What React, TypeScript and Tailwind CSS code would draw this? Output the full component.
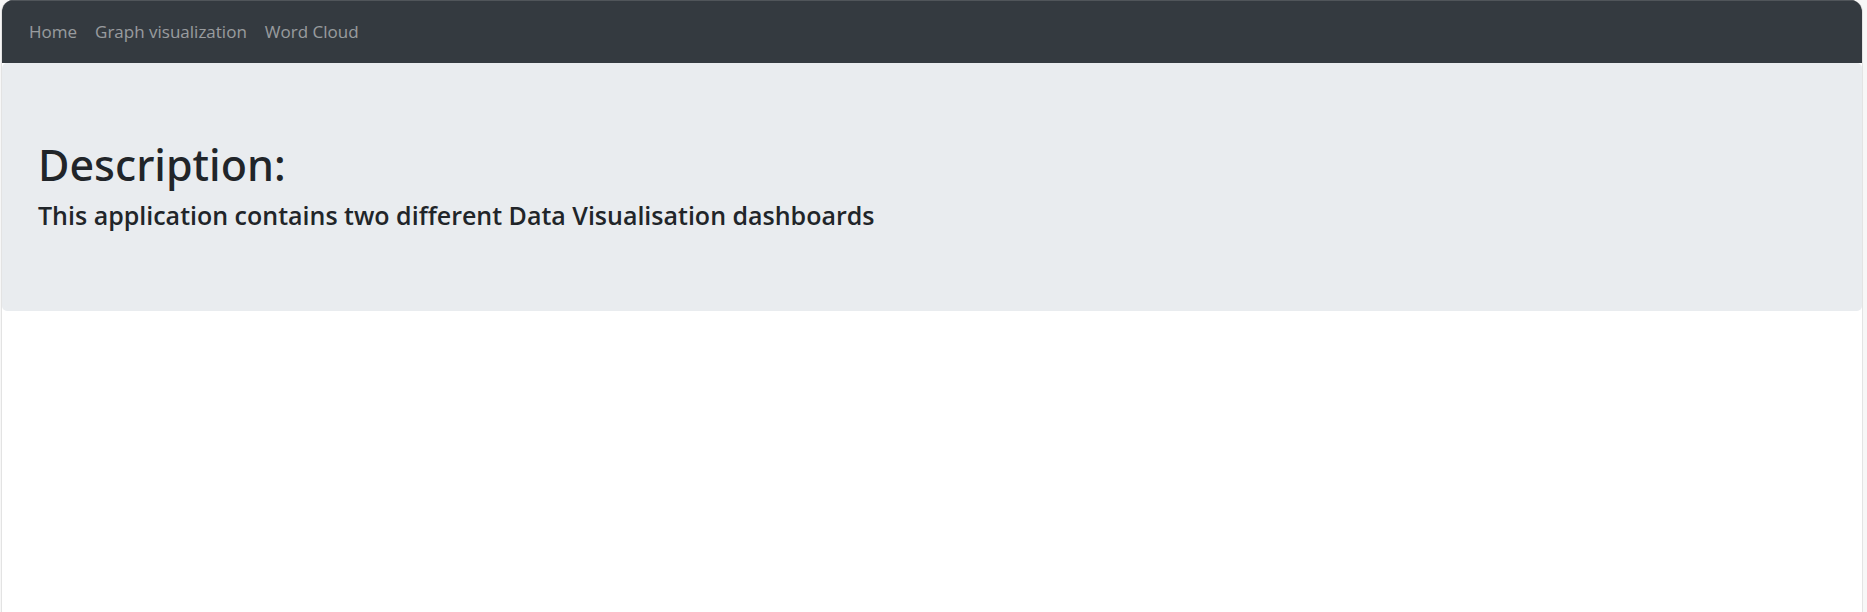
const links = ["Home", "Graph visualization", "Word Cloud"];

export default function App() {
  return (
    <div className="flex min-h-screen bg-[#f7f7f7] pr-1 pl-px font-['Open_Sans','Noto_Sans',sans-serif] text-[#212529]">
      <div className="grow overflow-hidden rounded-t-xl border-x border-[#e3e3e3] bg-white">
        <nav className="border-t border-[#50555a] bg-[#343a40] px-[18px] pt-[11px] pb-3">
          <ul className="flex text-[17px] leading-[27px]">
            {links.map((label) => (
              <li key={label}>
                <a href="#" className="block px-[9px] py-[6px] text-white/50">{label}</a>
              </li>
            ))}
          </ul>
        </nav>
        <main className="rounded-[5px] bg-[#e9ecef] px-9 pt-[75px] pb-[72px]">
          <h1 className="mb-[7px] font-['Noto_Sans',sans-serif] text-[43px] leading-[54px] font-medium">Description:</h1>
          <h2 className="mb-2 text-[25px] leading-8 font-semibold">
            This application contains two different Data Visualisation dashboards
          </h2>
        </main>
      </div>
    </div>
  );
}
